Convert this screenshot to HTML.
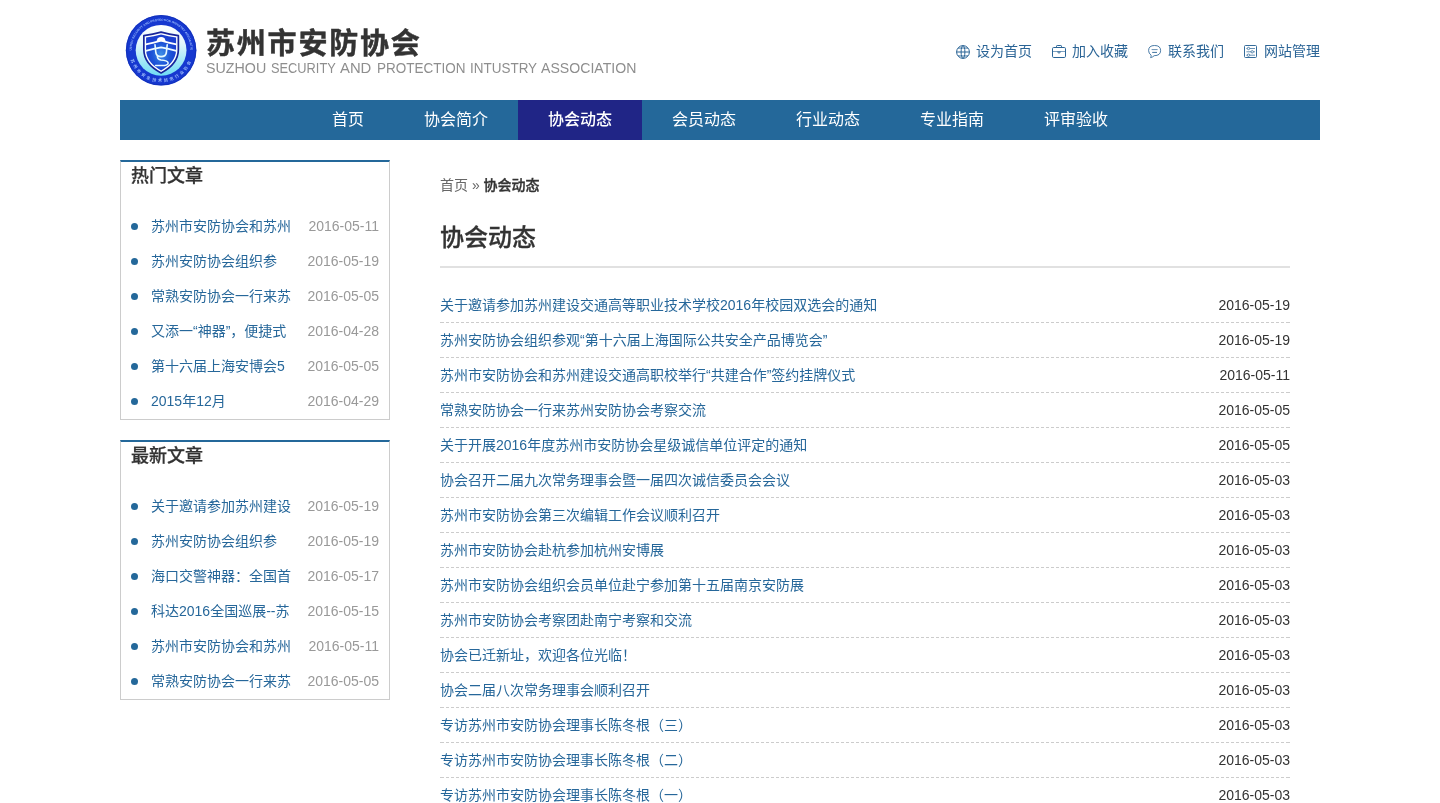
<!DOCTYPE html>
<html lang="zh-CN">
<head>
<meta charset="utf-8">
<title>协会动态 - 苏州市安防协会</title>
<style>
*{box-sizing:border-box;margin:0;padding:0}
html,body{background:#fff}
body{width:1440px;height:803px;overflow:hidden;font-family:"Liberation Sans","Noto Sans CJK SC",sans-serif;font-size:14px;color:#333;position:relative}
a{color:#26679a;text-decoration:none}
ul{list-style:none}
.wrap{width:1200px;margin:0 auto;position:relative;will-change:transform}
/* header */
.header{height:100px;position:relative}
.logo{position:absolute;left:0;top:0;width:90px;height:100px}
.sitename{position:absolute;left:86px;top:24px;font-size:29px;line-height:40px;font-weight:700;color:#333;letter-spacing:1.8px;-webkit-text-stroke:0.45px #333;white-space:nowrap}
.siteen{position:absolute;left:0;top:58px;font-size:14.5px;line-height:20px;color:#8e8e8e;white-space:nowrap}
.siteen span{position:absolute;top:0;transform-origin:0 0;display:block}
.toplinks{position:absolute;right:0;top:40px;height:22px;white-space:nowrap}
.toplinks a{display:inline-block;position:relative;padding-left:20px;margin-left:20px;line-height:22px;font-size:14px;color:#2a6496}
.toplinks a svg{position:absolute;left:0;top:0;width:20px;height:22px}
/* nav */
.nav{height:40px;background:#24689a;text-align:center;font-size:0}
.nav a{display:inline-block;height:40px;line-height:40px;padding:0 30px;font-size:16px;color:#fff}
.nav a.on{background:#202586;font-weight:500}
/* side */
.side{position:absolute;left:0;top:20px;width:270px}
.box{border:1px solid #ccc;border-top:2px solid #24689a;height:260px;margin-bottom:20px;position:relative}
.box h3{font-size:18px;line-height:24px;font-weight:500;color:#333;padding:2px 0 0 10px;-webkit-text-stroke:0.25px #333}
.box ul{position:absolute;left:0;top:47px;width:100%}
.box li{height:35px;line-height:35px;position:relative;padding-left:30px;white-space:nowrap}
.box li:before{content:"";position:absolute;left:10px;top:14px;width:7px;height:7px;border-radius:50%;background:#24689a}
.box li span{position:absolute;right:10px;top:0;color:#999}
/* main */
.main{position:absolute;left:320px;top:20px;width:850px}
.crumb{height:20px;line-height:20px;margin-top:15px;font-size:14px;color:#666}
.crumb b{color:#333;font-weight:500;-webkit-text-stroke:0.35px #333}
.main h1{font-size:24px;line-height:34px;font-weight:500;color:#333;margin-top:26px;-webkit-text-stroke:0.3px #333}
.hr{height:2px;background:#e1e1e1;margin-top:11px;margin-bottom:20px}
.list li{height:35px;line-height:34px;background:linear-gradient(#ccc,#ccc) 0 34px/1px 1px no-repeat,linear-gradient(#ccc,#ccc) 849px 34px/1px 1px no-repeat,repeating-linear-gradient(90deg,#ccc 0,#ccc 3px,transparent 3px,transparent 5px) 1px 34px/849px 1px no-repeat;position:relative;white-space:nowrap}
.list li span{position:absolute;right:0;top:0;color:#333}
</style>
</head>
<body>
<div class="wrap">
  <div class="header">
    <svg class="logo" viewBox="0 0 90 100" width="90" height="100">
      <defs>
        <linearGradient id="lg1" x1="0" y1="0" x2="0" y2="1"><stop offset="0" stop-color="#ffffff"/><stop offset="0.35" stop-color="#e4f6fc"/><stop offset="1" stop-color="#6fdcf4"/></linearGradient>
        <radialGradient id="lg2" cx="0.5" cy="0.55" r="0.5"><stop offset="0" stop-color="#3f8fe6"/><stop offset="0.6" stop-color="#1d55d8"/><stop offset="1" stop-color="#1a3fd0"/></radialGradient>
        <path id="arcT" d="M11.6,50.3 A29.5,29.5 0 0 1 70.6,50.3"/>
        <path id="arcB" d="M9.3,50.3 A31.8,31.8 0 0 0 72.9,50.3"/>
      </defs>
      <circle cx="41.1" cy="50.3" r="35.3" fill="#1638d0"/>
      <circle cx="41.1" cy="50.3" r="34.6" fill="none" stroke="#1230b4" stroke-width="0.8"/>
      <circle cx="41.1" cy="50.3" r="25.4" fill="url(#lg1)"/>
      <text font-family="Liberation Sans, sans-serif" font-size="2.9" font-weight="700" fill="#9fc0ff" letter-spacing="0.12"><textPath href="#arcT" startOffset="50%" text-anchor="middle">SUZHOU SECURITY AND PROTECTION INDUSTRY ASSOCIATION</textPath></text>
      <text font-family="Liberation Sans, Noto Sans CJK SC, sans-serif" font-size="4" font-weight="700" fill="#9dbcfb" letter-spacing="2.2"><textPath href="#arcB" startOffset="50%" text-anchor="middle">苏州市安全技术防范行业协会</textPath></text>
      <path d="M23.85,35.7 Q33,34.2 41.1,32.1 Q49.2,34.2 58.35,35.7 L58.35,49.5 C58.35,61.2 49.8,68.4 41.1,72.9 C32.4,68.4 23.85,61.2 23.85,49.5 Z" fill="#fff" stroke="#17259a" stroke-width="1.7" stroke-linejoin="round"/>
      <path d="M26.1,37.6 Q34,36.2 41.1,34.4 Q48.2,36.2 56.1,37.6 L56.1,49.5 C56.1,59.8 48.6,66.2 41.1,70.4 C33.6,66.2 26.1,59.8 26.1,49.5 Z" fill="url(#lg2)"/>
      <path d="M25.8,44.4 Q34,42.6 41.1,40.6 Q48.2,42.6 56.4,44.4" fill="none" stroke="#fff" stroke-width="1.7"/>
      <path d="M25.8,50.9 Q34,48.6 41.1,47.4 Q48.2,48.6 56.4,50.9" fill="none" stroke="#eefaff" stroke-width="1.7"/>
      <path d="M36.6,40.9 L37.6,38.2 Q41.1,35.6 44.6,38.2 L45.6,40.9 Z" fill="#fff"/>
      <path d="M35,44.8 L35.9,53 Q36.6,56.6 41.1,56.6 Q45.6,56.6 46.3,53 L47.2,44.8" fill="none" stroke="#e8fbff" stroke-width="1.6" stroke-linecap="round"/>
      <path d="M37.4,56.2 Q37.2,59.4 41,59.9 Q47.8,60.4 48.2,63 Q48.2,65.6 41.5,65.6 L35.6,65.4" fill="none" stroke="#e8fbff" stroke-width="1.5" stroke-linecap="round"/>
    </svg>
    <div class="sitename">苏州市安防协会</div>
    <div class="siteen"><span style="left:86.1px;transform:scaleX(0.984)">SUZHOU</span> <span style="left:151.1px;transform:scaleX(0.883)">SECURITY</span> <span style="left:219.8px;transform:scaleX(1.023)">AND</span> <span style="left:256.5px;transform:scaleX(0.931)">PROTECTION</span> <span style="left:349.7px;transform:scaleX(0.929)">INTUSTRY</span> <span style="left:420.7px;transform:scaleX(0.973)">ASSOCIATION</span></div>
    <div class="toplinks">
      <a><svg viewBox="0 0 20 22"><g fill="none" stroke="#2a6496" stroke-width="1"><circle cx="7" cy="12" r="6.4"/><ellipse cx="7" cy="12" rx="1.9" ry="6.4"/><path d="M0.6,12H13.4" stroke-opacity=".5" stroke-width="2"/><path d="M2,8.1Q7,7.9 12,8.1M2,15.9Q7,16.1 12,15.9" stroke-opacity=".9"/></g></svg>设为首页</a><a><svg viewBox="0 0 20 22"><g fill="none" stroke="#2a6496" stroke-width="1"><rect x="0.5" y="7.5" width="13" height="10" rx="1.2"/><path d="M4.5,7.5V6.2Q4.5,5.5 5.2,5.5H8.8Q9.5,5.5 9.5,6.2V7.5"/><path d="M1,11.5H13" stroke-opacity=".6"/><path d="M5.3,11.8L7,13.6L8.7,11.8Z" fill="#2a6496" fill-opacity=".6" stroke-opacity=".5"/></g></svg>加入收藏</a><a><svg viewBox="0 0 20 22"><g fill="none" stroke="#2a6496" stroke-width="1" stroke-opacity=".85"><path d="M3.1,15.2Q0.6,13.3 0.6,10.6Q0.6,5.5 6.6,5.5Q12.6,5.5 12.6,10.6Q12.6,15.6 6.2,15.7Q4.6,17.2 2.6,17.6Q3.2,16.4 3.1,15.2Z"/><path d="M3.6,9.6H9.6" stroke-opacity=".7"/><path d="M4.2,12.4H9" stroke-opacity=".9"/></g></svg>联系我们</a><a><svg viewBox="0 0 20 22"><g fill="none" stroke="#2a6496" stroke-width="1"><rect x="0.5" y="5.5" width="12" height="12" rx="1" stroke-opacity=".95"/><g stroke-opacity=".7"><path d="M2.4,8.5H11M2.4,11.8H11M2.4,15.2H11"/><circle cx="4.5" cy="8.5" r="1.2" fill="#fff"/><circle cx="8.2" cy="11.8" r="1.2" fill="#fff"/><circle cx="4.5" cy="15.2" r="1.2" fill="#fff"/></g></g></svg>网站管理</a>
    </div>
  </div>
  <div class="nav">
    <a>首页</a><a>协会简介</a><a class="on">协会动态</a><a>会员动态</a><a>行业动态</a><a>专业指南</a><a>评审验收</a>
  </div>
  <div style="position:relative">
    <div class="side">
      <div class="box">
        <h3>热门文章</h3>
        <ul>
          <li><a>苏州市安防协会和苏州</a><span>2016-05-11</span></li>
          <li><a>苏州安防协会组织参</a><span>2016-05-19</span></li>
          <li><a>常熟安防协会一行来苏</a><span>2016-05-05</span></li>
          <li><a>又添一“神器”，便捷式</a><span>2016-04-28</span></li>
          <li><a>第十六届上海安博会5</a><span>2016-05-05</span></li>
          <li><a>2015年12月</a><span>2016-04-29</span></li>
        </ul>
      </div>
      <div class="box">
        <h3>最新文章</h3>
        <ul>
          <li><a>关于邀请参加苏州建设</a><span>2016-05-19</span></li>
          <li><a>苏州安防协会组织参</a><span>2016-05-19</span></li>
          <li><a>海口交警神器：全国首</a><span>2016-05-17</span></li>
          <li><a>科达2016全国巡展--苏</a><span>2016-05-15</span></li>
          <li><a>苏州市安防协会和苏州</a><span>2016-05-11</span></li>
          <li><a>常熟安防协会一行来苏</a><span>2016-05-05</span></li>
        </ul>
      </div>
    </div>
    <div class="main">
      <div class="crumb">首页 » <b>协会动态</b></div>
      <h1>协会动态</h1>
      <div class="hr"></div>
      <ul class="list">
        <li><a>关于邀请参加苏州建设交通高等职业技术学校2016年校园双选会的通知</a><span>2016-05-19</span></li>
        <li><a>苏州安防协会组织参观“第十六届上海国际公共安全产品博览会”</a><span>2016-05-19</span></li>
        <li><a>苏州市安防协会和苏州建设交通高职校举行“共建合作”签约挂牌仪式</a><span>2016-05-11</span></li>
        <li><a>常熟安防协会一行来苏州安防协会考察交流</a><span>2016-05-05</span></li>
        <li><a>关于开展2016年度苏州市安防协会星级诚信单位评定的通知</a><span>2016-05-05</span></li>
        <li><a>协会召开二届九次常务理事会暨一届四次诚信委员会会议</a><span>2016-05-03</span></li>
        <li><a>苏州市安防协会第三次编辑工作会议顺利召开</a><span>2016-05-03</span></li>
        <li><a>苏州市安防协会赴杭参加杭州安博展</a><span>2016-05-03</span></li>
        <li><a>苏州市安防协会组织会员单位赴宁参加第十五届南京安防展</a><span>2016-05-03</span></li>
        <li><a>苏州市安防协会考察团赴南宁考察和交流</a><span>2016-05-03</span></li>
        <li><a>协会已迁新址，欢迎各位光临！</a><span>2016-05-03</span></li>
        <li><a>协会二届八次常务理事会顺利召开</a><span>2016-05-03</span></li>
        <li><a>专访苏州市安防协会理事长陈冬根（三）</a><span>2016-05-03</span></li>
        <li><a>专访苏州市安防协会理事长陈冬根（二）</a><span>2016-05-03</span></li>
        <li><a>专访苏州市安防协会理事长陈冬根（一）</a><span>2016-05-03</span></li>
      </ul>
    </div>
  </div>
</div>
</body>
</html>
